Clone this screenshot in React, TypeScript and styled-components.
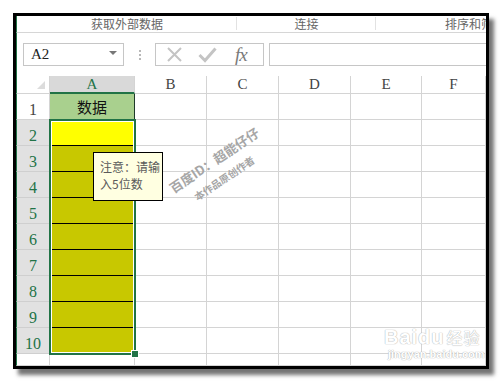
import React from 'react';
import styled, { createGlobalStyle } from 'styled-components';

const GlobalStyle = createGlobalStyle`
  html, body {
    margin: 0;
    padding: 0;
    background: #ffffff;
    font-family: "Noto Sans CJK SC", "Liberation Sans", sans-serif;
  }
`;

const CJK = `"Noto Sans CJK SC", "Liberation Sans", sans-serif`;
const HEAD = `"Liberation Serif", "Noto Sans CJK SC", serif`;
const GREEN = '#217346';
const GRID = '#d4d4d4';

const COLS = ['A', 'B', 'C', 'D', 'E', 'F'];
const ROWS = [1, 2, 3, 4, 5, 6, 7, 8, 9, 10];

const Page = styled.div`
  padding: 13px;
`;

const Frame = styled.div`
  width: 470px;
  height: 350px;
  border: 3px solid #000;
  box-shadow: 5px 6px 4px rgba(0, 0, 0, 0.55);
  overflow: hidden;
  display: flex;
  flex-direction: column;
  background: #fff;
`;

const Ribbon = styled.div`
  height: 16px;
  flex: none;
  display: flex;
  border-bottom: 1px solid #d6d6d6;
  border-left: 1px solid ${GREEN};
`;

const RibbonGroup = styled.div<{ $w: number; $last?: boolean }>`
  flex: none;
  width: ${(p) => p.$w}px;
  display: flex;
  align-items: center;
  justify-content: center;
  font-family: ${CJK};
  font-size: 12px;
  color: #666;
  line-height: 16px;
  position: relative;
  &::after {
    content: '';
    display: ${(p) => (p.$last ? 'none' : 'block')};
    position: absolute;
    right: 0;
    top: 1px;
    bottom: 2px;
    width: 1px;
    background: #e2e2e2;
  }
`;

const FormulaBar = styled.div`
  height: 43px;
  flex: none;
  display: flex;
  align-items: flex-start;
  padding: 10px 0 0 6px;
  box-sizing: border-box;
  border-left: 1px solid ${GREEN};
`;

const NameBox = styled.div`
  width: 101px;
  height: 23px;
  box-sizing: border-box;
  border: 1px solid #c6c6c6;
  display: flex;
  align-items: center;
  justify-content: space-between;
  padding: 0 6px 0 7px;
  font-family: ${HEAD};
  font-size: 15px;
  color: #222;
`;

const Arrow = styled.span`
  width: 0;
  height: 0;
  border-left: 4px solid transparent;
  border-right: 4px solid transparent;
  border-top: 4px solid #777;
  margin-top: -3px;
`;

const Dots = styled.div`
  width: 31px;
  height: 23px;
  display: flex;
  flex-direction: column;
  align-items: center;
  justify-content: center;
  gap: 2px;
  span {
    width: 2px;
    height: 2px;
    background: #b8b8b8;
  }
`;

const FxBox = styled.div`
  width: 109px;
  height: 23px;
  box-sizing: border-box;
  border: 1px solid #c6c6c6;
  display: flex;
  align-items: center;
  padding-left: 10px;
  gap: 15px;
`;

const Fx = styled.span`
  font-family: "Liberation Serif", "DejaVu Serif", serif;
  font-style: italic;
  font-size: 19px;
  color: #7a7a7a;
  margin-left: 3px;
  letter-spacing: -1px;
`;

const FormulaInput = styled.div`
  flex: 1;
  margin-left: 5px;
  height: 23px;
  box-sizing: border-box;
  border: 1px solid #c6c6c6;
  border-right: none;
`;

const SheetWrap = styled.div`
  position: relative;
  flex: 1;
`;

const Sheet = styled.div`
  display: grid;
  grid-template-columns: 34px 85px 72px 72px 72px 71px 1fr;
  grid-template-rows: 18px repeat(10, 26px) 12px;
`;

const Corner = styled.div`
  box-sizing: border-box;
  border-right: 1px solid ${GRID};
  border-bottom: 1px solid ${GRID};
  border-left: 1px solid ${GREEN};
  position: relative;
  &::after {
    content: '';
    position: absolute;
    right: 4px;
    bottom: 4px;
    width: 0;
    height: 0;
    border-left: 8px solid transparent;
    border-bottom: 8px solid #dcdcdc;
  }
`;

const ColHead = styled.div<{ $sel?: boolean }>`
  box-sizing: border-box;
  background: ${(p) => (p.$sel ? '#d9d9d9' : '#fff')};
  border-right: 1px solid ${GRID};
  border-bottom: ${(p) => (p.$sel ? `2px solid ${GREEN}` : `1px solid ${GRID}`)};
  display: flex;
  align-items: center;
  justify-content: center;
  font-family: ${HEAD};
  font-size: 15px;
  color: ${(p) => (p.$sel ? GREEN : '#444')};
`;

const RowHead = styled.div<{ $sel?: boolean }>`
  box-sizing: border-box;
  background: ${(p) => (p.$sel ? '#e1e1e1' : '#fff')};
  border-right: 1px solid ${GRID};
  border-bottom: 1px solid ${(p) => (p.$sel ? '#cfcfcf' : GRID)};
  border-left: 1px solid ${GREEN};
  display: flex;
  align-items: flex-end;
  justify-content: center;
  padding-bottom: 1px;
  font-family: ${HEAD};
  font-size: 16px;
  line-height: 17px;
  color: ${(p) => (p.$sel ? GREEN : '#444')};
`;

const Cell = styled.div<{ $bg?: string; $line?: string; $right?: string }>`
  box-sizing: border-box;
  background: ${(p) => p.$bg ?? '#fff'};
  border-right: 1px solid ${(p) => p.$right ?? GRID};
  border-bottom: 1px solid ${(p) => p.$line ?? GRID};
  display: flex;
  align-items: center;
  justify-content: center;
  font-family: ${CJK};
  font-size: 15px;
  color: #111;
`;

const Selection = styled.div`
  position: absolute;
  left: 33px;
  top: 43px;
  width: 87px;
  height: 236px;
  box-sizing: border-box;
  border: 2px solid ${GREEN};
  box-shadow: inset 0 0 0 1px #fff;
  pointer-events: none;
`;

const FillHandle = styled.div`
  position: absolute;
  left: 116px;
  top: 275px;
  width: 6px;
  height: 6px;
  background: ${GREEN};
  outline: 1px solid #fff;
`;

const Tip = styled.div`
  position: absolute;
  left: 77px;
  top: 76px;
  width: 70px;
  height: 49px;
  box-sizing: border-box;
  background: #ffffe1;
  border: 1px solid #000;
  padding: 5px 0 0 6px;
  font-family: ${CJK};
  font-size: 12px;
  line-height: 17px;
  color: #5a5a5a;
  white-space: nowrap;
  overflow: hidden;
`;

const Mark = styled.div<{ $x: number; $y: number; $size: number }>`
  position: absolute;
  left: ${(p) => p.$x}px;
  top: ${(p) => p.$y}px;
  transform: translate(-50%, -50%) rotate(-34deg);
  font-family: ${CJK};
  font-weight: 700;
  font-size: ${(p) => p.$size}px;
  color: #a6a6a6;
  white-space: nowrap;
  pointer-events: none;
`;

const BaiduMark = styled.div`
  position: absolute;
  left: 368px;
  top: 250px;
  display: flex;
  flex-direction: column;
  align-items: flex-start;
  color: #fff;
  font-family: "Liberation Sans", ${CJK};
  text-shadow: 0 0 1px #b4b4b4, 0 0 1px #b4b4b4;
  pointer-events: none;
`;

const BaiduLogo = styled.div`
  font-size: 20px;
  font-weight: 700;
  line-height: 22px;
  letter-spacing: 1px;
  span {
    font-family: ${CJK};
    font-size: 16px;
    font-weight: 400;
    margin-left: 2px;
  }
`;

const BaiduUrl = styled.div`
  font-size: 11px;
  font-weight: 700;
  line-height: 12px;
  margin-left: 4px;
`;

const CrossIcon = () => (
  <svg width="17" height="17" viewBox="0 0 17 17">
    <path d="M2 2 L15 15 M15 2 L2 15" stroke="#c4c4c4" strokeWidth="2" fill="none" />
  </svg>
);

const CheckIcon = () => (
  <svg width="19" height="17" viewBox="0 0 19 17">
    <path d="M1.5 9 L7 14.5 L17.5 2.5" stroke="#c4c4c4" strokeWidth="3" fill="none" />
  </svg>
);

const cellBg = (r: number) => (r === 1 ? '#a9d08e' : r === 2 ? '#ffff00' : '#c8c800');

const App = () => (
  <>
    <GlobalStyle />
    <Page>
      <Frame>
        <Ribbon>
          <RibbonGroup $w={220}>获取外部数据</RibbonGroup>
          <RibbonGroup $w={139}>连接</RibbonGroup>
          <RibbonGroup $w={198} $last>
            排序和筛选
          </RibbonGroup>
        </Ribbon>
        <FormulaBar>
          <NameBox>
            A2
            <Arrow />
          </NameBox>
          <Dots>
            <span />
            <span />
            <span />
          </Dots>
          <FxBox>
            <CrossIcon />
            <CheckIcon />
            <Fx>fx</Fx>
          </FxBox>
          <FormulaInput />
        </FormulaBar>
        <SheetWrap>
          <Sheet>
            <Corner />
            {COLS.map((c) => (
              <ColHead key={c} $sel={c === 'A'}>
                {c}
              </ColHead>
            ))}
            {ROWS.map((r) => (
              <React.Fragment key={r}>
                <RowHead $sel={r > 1}>{r}</RowHead>
                <Cell
                  $bg={cellBg(r)}
                  $line={r === 1 ? GREEN : '#000'}
                  $right={r === 1 ? '#1f3a2a' : GRID}
                >
                  {r === 1 ? '数据' : ''}
                </Cell>
                {COLS.slice(1).map((c) => (
                  <Cell key={c} />
                ))}
              </React.Fragment>
            ))}
            <RowHead />
            {COLS.map((c) => (
              <Cell key={c} />
            ))}
          </Sheet>
          <Selection />
          <FillHandle />
          <Tip>
            注意：请输
            <br />
            入5位数
          </Tip>
          <Mark $x={198} $y={84} $size={13}>
            百度ID：超能仔仔
          </Mark>
          <Mark $x={208} $y={102} $size={10}>
            本作品原创作者
          </Mark>
          <BaiduMark>
            <BaiduLogo>
              Baidu<span>经验</span>
            </BaiduLogo>
            <BaiduUrl>jingyan.baidu.com</BaiduUrl>
          </BaiduMark>
        </SheetWrap>
      </Frame>
    </Page>
  </>
);

export default App;
